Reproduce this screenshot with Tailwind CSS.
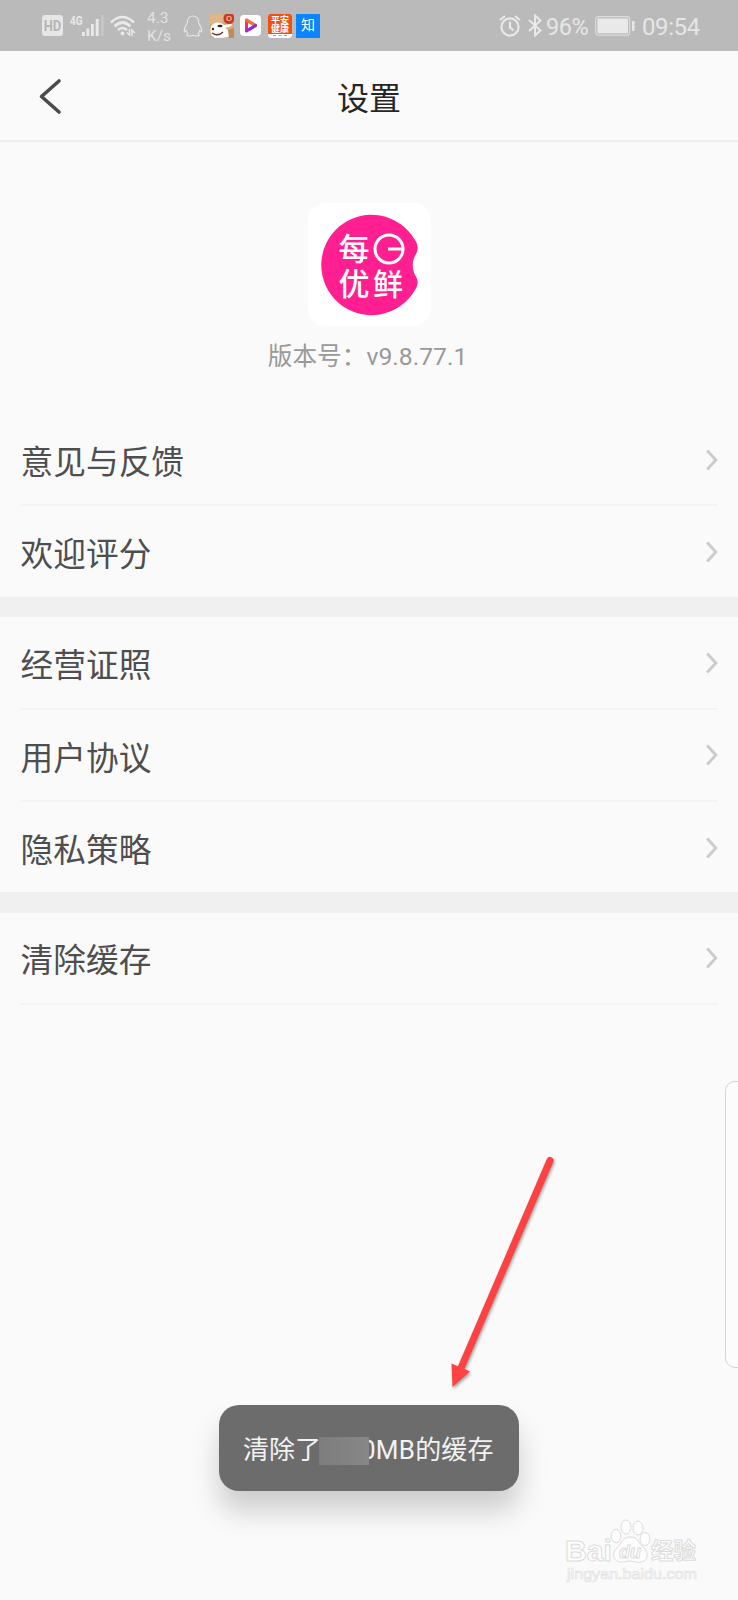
<!DOCTYPE html>
<html lang="zh-CN">
<head>
    <meta charset="UTF-8">
    <meta name="viewport" content="width=device-width, initial-scale=1.0">
    <title>设置</title>
    <script src="https://cdn.jsdelivr.net/npm/@tailwindcss/browser@4"></script>
</head>
<body class="bg-[#fafafa] font-[Roboto,'Noto_Sans_CJK_SC',sans-serif]">
    <!-- shared row arrow -->
    <svg class="hidden">
        <symbol id="chevron" viewBox="0 0 12 22">
            <path d="M1.2 1.6L9.800 11L1.2 20.4" fill="none" stroke="#cbcbcb" stroke-width="2.9"/>
        </symbol>
    </svg>

    <div class="relative w-[738px] h-[1600px] overflow-hidden flex flex-col">

        <!-- Status bar -->
        <div class="h-[51px] shrink-0 bg-[#bababa] text-[#e6e6e6] flex items-center justify-between pl-[42px] pr-[38px]">
            <div class="flex items-center">
                <svg class="w-[21px] h-[21px]" viewBox="0 0 21 21">
                    <rect width="21" height="21" rx="3" fill="#e6e6e6"/>
                    <text x="1.800" y="15.500" font-family="Roboto" font-size="14.500" font-weight="700" textLength="17.400" lengthAdjust="spacingAndGlyphs" fill="#b4b4b4">HD</text>
                </svg>
                <svg class="w-[35px] h-[24px] ml-[6px]" viewBox="0 0 35 24">
                    <text x="1" y="10.500" font-family="Roboto" font-size="13" font-weight="700" textLength="12.500" lengthAdjust="spacingAndGlyphs" fill="#e9e9e9">4G</text>
                    <g fill="#e9e9e9">
                        <rect x="13" y="18" width="2.8" height="4"/>
                        <rect x="17.5" y="14.5" width="2.8" height="7.5"/>
                        <rect x="22" y="10" width="2.8" height="12"/>
                        <rect x="26.7" y="5" width="3" height="17"/>
                        <rect x="32" y="1" width="2.6" height="21" fill="#c8c8c8"/>
                    </g>
                </svg>
                <svg class="w-[26px] h-[22px] ml-[6px]" viewBox="0 0 26 22" fill="none" stroke="#e9e9e9" stroke-width="2.6">
                    <path d="M1 7.5Q12.500 -3.500 24 7.500"/>
                    <path d="M4.500 11.500Q12.500 3.500 20.500 11.500"/>
                    <path d="M8 15Q12.500 11 17 15"/>
                    <circle cx="12.500" cy="18.500" r="2" fill="#e9e9e9" stroke="none"/>
                    <path d="M19.500 14v6l-2.500-2.500M22 21v-6l2.800 3" stroke-width="1.500"/>
                </svg>
                <div class="w-[26px] ml-[11px] pt-[2px] text-[15.500px] leading-[18px] text-[#e2e2e2]">4.3<br>K/s</div>
                <svg class="w-[20px] h-[22px] ml-[10px]" viewBox="0 0 20 22" fill="none" stroke="#e4e4e4" stroke-width="1.200">
                    <path d="M10 1C6 1 4.200 4 4.300 8C3 10.500 1 13 1.200 16C1.300 17.500 2.200 17 3.300 15.500C3.600 17 4.200 18 5 18.800C3 20 4 21 6 21C8 21 9 20.500 10 20.300C11 20.500 12 21 14 21C16 21 17 20 15 18.800C15.800 18 16.400 17 16.700 15.500C17.800 17 18.700 17.500 18.800 16C19 13 17 10.500 15.700 8C15.800 4 14 1 10 1Z"/>
                </svg>
                <svg class="w-[24px] h-[24px] ml-[7px]" viewBox="0 0 24 24">
                    <rect width="24" height="24" fill="#d6aa7c"/>
                    <path d="M0 0H13L14 6L6 10L2 14L0 9Z" fill="#dfb68a"/>
                    <path d="M1 13C3 8 10 7 14 11L21 10Q24 11 19 13L15 14C20 17 22 20 20 22C16 24 10 24 5 24C0 22 0 17 1 13Z" fill="#fff"/>
                    <circle cx="3" cy="15" r="1.200" fill="#3a2723"/>
                    <ellipse cx="10" cy="12" rx="2.600" ry="1.300" fill="#3a2723"/>
                    <path d="M2 19Q8 23 13 18" fill="none" stroke="#5d302a" stroke-width="1.300"/>
                    <path d="M18 16L24 14V24H19Z" fill="#c08b58"/>
                    <circle cx="19" cy="4.500" r="5.500" fill="#c33c27"/>
                    <circle cx="19" cy="4.500" r="2.800" fill="#f0a083"/>
                    <rect x="17.800" y="3.300" width="2.400" height="2.400" fill="#b72c1d"/>
                </svg>
                <svg class="w-[21px] h-[21px] ml-[6px]" viewBox="0 0 21 21">
                    <defs>
                        <linearGradient id="play" x1="0" y1="0" x2="0.300" y2="1">
                            <stop offset="0" stop-color="#f5413a"/>
                            <stop offset="0.500" stop-color="#e92d83"/>
                            <stop offset="1" stop-color="#a41fe0"/>
                        </linearGradient>
                    </defs>
                    <rect width="21" height="21" rx="4" fill="#fff"/>
                    <path d="M6.500 5L15.500 10.500L6.500 16Z" fill="none" stroke="url(#play)" stroke-width="3" stroke-linejoin="round"/>
                    <path d="M6.500 5L15.500 10.500" stroke="#f4742c" stroke-width="3" stroke-linecap="round"/>
                    <path d="M15.500 10.500L10 14" stroke="#8a2be0" stroke-width="3" stroke-linecap="round"/>
                </svg>
                <div class="w-[24px] h-[24px] ml-[7px] rounded-[3px] overflow-hidden bg-[#f2500f] flex flex-col text-white text-center font-bold text-[9px] leading-[9px]">
                    <div class="pt-[2px] h-[20px]">平安<br>健康</div>
                    <div class="h-[4px] bg-white flex items-center justify-center"><div class="w-[14px] border-t border-dashed border-[#e88462]"></div></div>
                </div>
                <div class="w-[24px] h-[24px] ml-[4px] bg-[#0b84ff] text-white text-[14px] leading-[23px] text-center">知</div>
            </div>

            <div class="flex items-center">
                <svg class="w-[22px] h-[22px]" viewBox="0 0 22 22" fill="none" stroke="#e9e9e9" stroke-width="2.200">
                    <circle cx="11" cy="12" r="8.600"/>
                    <path d="M11 6.500V12.500L14.500 15.500M1 5L6 1M21 5L16 1"/>
                </svg>
                <svg class="w-[14px] h-[23px] ml-[7px]" viewBox="0 0 14 23" fill="none" stroke="#e9e9e9" stroke-width="2">
                    <path d="M1 6L12.500 16.500L7 21.500V1.500L12.500 6.500L1 17"/>
                </svg>
                <div class="ml-[4px] w-[43px] pt-[2px] text-[23.500px] leading-[24px] tracking-[-0.4px] whitespace-nowrap">96%</div>
                <svg class="w-[40px] h-[20px] ml-[6px]" viewBox="0 0 40 20">
                    <rect x="0.700" y="0.700" width="34" height="18.400" rx="2.500" fill="none" stroke="#dcdcdc" stroke-width="1.200"/>
                    <rect x="2.500" y="2.500" width="30.500" height="14.800" fill="#e9e9e9"/>
                    <rect x="37" y="5" width="2.500" height="10" fill="#e6e6e6"/>
                </svg>
                <div class="ml-[7px] w-[58px] pt-[2px] text-[24px] leading-[24px] tracking-[-0.4px] whitespace-nowrap">09:54</div>
            </div>
        </div>

        <!-- Title bar -->
        <div class="h-[91px] shrink-0 border-b-2 border-[#eeeeee] grid grid-cols-3 items-center">
            <svg class="w-[24px] h-[38px] ml-[38px]" viewBox="0 0 24 38">
                <path d="M21 4L3.500 19.500L21 35" fill="none" stroke="#4b4b4b" stroke-width="3.600" stroke-linecap="round" stroke-linejoin="round"/>
            </svg>
            <h1 class="text-center text-[32px] leading-[40px] pt-[6px] text-[#262626]">设置</h1>
        </div>

        <!-- Logo and version -->
        <div class="h-[271px] shrink-0 pt-[61px] flex flex-col items-center">
            <svg class="w-[123px] h-[123px]" viewBox="0 0 123 123">
                <rect width="123" height="123" rx="18" fill="#fff"/>
                <path d="M107 37A50.200 50.200 0 1 0 107 87C111 81 110 76 107 72C104 66 104 58 107 53C110 48 111 43 107 37Z" fill="#ff1f90"/>
                <g fill="#fff" font-family="Noto Sans CJK SC" font-weight="500" font-size="31">
                    <text x="30.500" y="57">每</text>
                    <text x="30.500" y="91.500">优</text>
                    <text x="65" y="91.500" font-size="30">鲜</text>
                </g>
                <g fill="none" stroke="#fff" stroke-width="3">
                    <circle cx="81" cy="46" r="14"/>
                    <path d="M80 46H95"/>
                </g>
            </svg>
            <div class="mt-[14px] mr-[3px] text-[24.700px] leading-[33px] text-[#999999] whitespace-nowrap">版本号：v9.8.77.1</div>
        </div>

        <!-- Settings list -->
        <div class="shrink-0 text-[#4e4e4e] text-[32.700px] leading-[40px]">
            <div class="px-[20px]">
                <div class="h-[93px] flex items-center justify-between border-b-2 border-[#f4f4f4]">
                    <span class="pt-[9px] pl-[0.600px]">意见与反馈</span>
                    <svg class="w-[12px] h-[22px] mt-[2px]"><use href="#chevron"/></svg>
                </div>
                <div class="h-[91px] flex items-center justify-between">
                    <span class="pt-[7px] pl-[0.600px]">欢迎评分</span>
                    <svg class="w-[12px] h-[22px]"><use href="#chevron"/></svg>
                </div>
            </div>
            <div class="h-[20px] bg-[#f0f0f0]"></div>
            <div class="px-[20px]">
                <div class="h-[93px] flex items-center justify-between border-b-2 border-[#f4f4f4]">
                    <span class="pt-[7px] pl-[0.600px]">经营证照</span>
                    <svg class="w-[12px] h-[22px]"><use href="#chevron"/></svg>
                </div>
                <div class="h-[92px] flex items-center justify-between border-b-2 border-[#f4f4f4]">
                    <span class="pt-[7px] pl-[0.600px]">用户协议</span>
                    <svg class="w-[12px] h-[22px]"><use href="#chevron"/></svg>
                </div>
                <div class="h-[90px] flex items-center justify-between">
                    <span class="pt-[8px] pl-[0.600px]">隐私策略</span>
                    <svg class="w-[12px] h-[22px] mt-[1px]"><use href="#chevron"/></svg>
                </div>
            </div>
            <div class="h-[21px] bg-[#f0f0f0]"></div>
            <div class="px-[20px]">
                <div class="h-[92px] flex items-center justify-between border-b-2 border-[#f4f4f4]">
                    <span class="pt-[6px] pl-[0.600px]">清除缓存</span>
                    <svg class="w-[12px] h-[22px]"><use href="#chevron"/></svg>
                </div>
            </div>
        </div>

        <!-- Edge panel -->
        <div class="absolute left-[725px] top-[1081px] w-[30px] h-[287px] rounded-[10px] border border-[#d4d4d4] bg-[#fcfcfc]"></div>

        <!-- Arrow -->
        <svg class="absolute left-[430px] top-[1140px] w-[140px] h-[260px] drop-shadow-[1px_2px_1.5px_rgba(0,0,0,0.35)]" viewBox="0 0 140 260">
            <path d="M120 20.500L31 228" stroke="#fc4242" stroke-width="7" stroke-linecap="round"/>
            <path d="M21.500 223.500L40 231.500L22.500 247Z" fill="#fc4242"/>
        </svg>

        <!-- Toast -->
        <div class="absolute left-[219px] top-[1405px] w-[300px] h-[86px] rounded-[20px] bg-[#6c6c6c] shadow-[0_20px_28px_rgba(0,0,0,0.18)] flex items-center pl-[24px] text-[#f2f2f2] text-[26px] leading-[32px] whitespace-nowrap">
            <span class="pt-[3px]">清除了</span>
            <span class="w-[50px] h-[28px] mt-[5px] ml-[-2px] bg-linear-to-r from-[#7d7d7d] to-[#878787] z-10"></span>
            <span class="pt-[3px] ml-[-8px] tracking-[0.200px]">0MB的缓存</span>
        </div>

        <!-- Watermark -->
        <svg class="absolute left-[560px] top-[1515px] w-[145px] h-[75px]" viewBox="0 0 145 75" fill="#fdfdfd" stroke="#dcdcdc" stroke-width="1">
            <text x="5" y="46" font-family="Liberation Sans" font-weight="700" font-size="30" textLength="47" lengthAdjust="spacingAndGlyphs">Bai</text>
            <ellipse cx="56" cy="21" rx="5" ry="6.500"/>
            <ellipse cx="66" cy="12" rx="5" ry="7"/>
            <ellipse cx="78" cy="13" rx="5" ry="7"/>
            <ellipse cx="85" cy="24" rx="5" ry="6.500"/>
            <path d="M70 22C62 22 61 30 56 34C51 39 54 47 61 47C66 47 67 46 70 46C74 46 76 48 81 47C88 46 89 38 84 33C79 29 78 22 70 22Z"/>
            <text x="59" y="43" font-family="Liberation Sans" font-weight="700" font-style="italic" font-size="18" textLength="22" lengthAdjust="spacingAndGlyphs">du</text>
            <text x="91" y="44" font-family="Noto Sans CJK SC" font-weight="700" font-size="22.500">经验</text>
            <text x="7" y="64" font-family="Liberation Sans" font-weight="400" font-size="15" textLength="130" lengthAdjust="spacingAndGlyphs" stroke="#e2e2e2" stroke-width="0.700">jingyan.baidu.com</text>
        </svg>
    </div>
</body>
</html>
